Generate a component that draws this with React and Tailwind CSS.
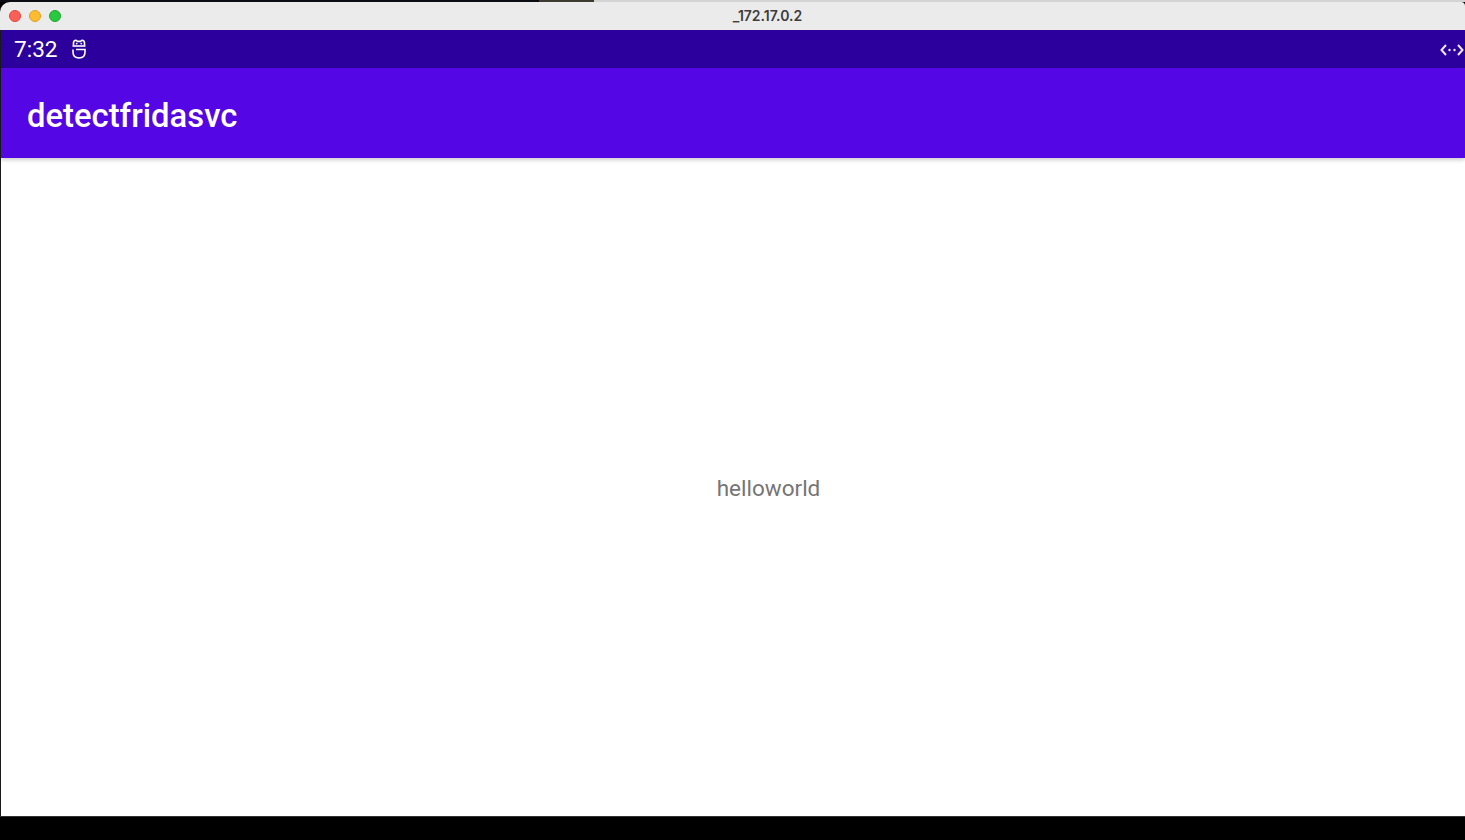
const App = () => {
  return (
    <div className="w-[1465px] h-[840px] flex flex-col overflow-hidden bg-black font-['Roboto',sans-serif]">
      {/* desktop peeking above the window */}
      <div className="h-[2px] flex shrink-0">
        <div className="w-[539px] bg-[#0b0b12]" />
        <div className="w-[55px] bg-[#3d3b30]" />
        <div className="flex-1 bg-[#d4d4d4]" />
      </div>

      <div className="h-[28px] shrink-0 relative flex items-center justify-center bg-[#ebebeb] rounded-tl-[10px] rounded-tr-[4px]">
        <div className="absolute left-[9px] top-[8px] flex gap-[8px]">
          <span className="size-[12px] rounded-full bg-[#fe5f57] border border-[#e0443e]" />
          <span className="size-[12px] rounded-full bg-[#febc2e] border border-[#dea123]" />
          <span className="size-[12px] rounded-full bg-[#28c840] border border-[#1aab29]" />
        </div>
        <span className="text-[14px] font-semibold text-[#3c3c3c] font-['Inter',sans-serif] ml-[70px] mb-[2px]">_172.17.0.2</span>
      </div>

      <div className="flex-1 flex flex-col border-l border-[#1a1a1a] min-h-0">
        <div className="h-[38px] shrink-0 flex items-center justify-between bg-[#2c009c] text-white">
          <div className="flex items-center pl-[13px]">
            <span className="text-[22.6px] leading-none mt-[2px]">7:32</span>
            <svg className="ml-[13px]" width="16" height="20" viewBox="0 0 16 20" fill="none" stroke="white" strokeWidth="1.6">
              <path d="M2.5 6.5V4Q2.5 1.2 5 1.2L6.5 2.4H9.5L11 1.2Q13.5 1.2 13.5 4V6.5" />
              <path d="M1.5 7H14.5" />
              <path d="M2 10.5V13Q2 19 8 19Q14 19 14 13V10.5H5" />
              <circle cx="5.7" cy="4.6" r="0.9" fill="white" stroke="none" />
              <circle cx="10.3" cy="4.6" r="0.9" fill="white" stroke="none" />
            </svg>
          </div>
          <svg className="mr-[1px] mt-[1px]" width="24" height="14" viewBox="0 0 24 14" fill="none" stroke="#f0e8ff" strokeWidth="2">
            <path d="M6 2L1.5 7L6 12" />
            <path d="M18 2L22.5 7L18 12" />
            <circle cx="9.5" cy="7" r="1.2" fill="#f0e8ff" stroke="none" />
            <circle cx="14.5" cy="7" r="1.2" fill="#f0e8ff" stroke="none" />
          </svg>
        </div>

        <div className="h-[90px] shrink-0 flex items-center pl-[26px] bg-[#5506e4] relative shadow-[0_2px_4px_rgba(0,0,0,0.2)]">
          <span className="text-[32.8px] font-medium text-white leading-none mt-[7px]">detectfridasvc</span>
        </div>

        <div className="flex-1 flex items-center justify-center bg-white">
          <span className="text-[22.5px] text-[#757575] leading-none ml-[71px] mt-[2px]">helloworld</span>
        </div>
      </div>

      <div className="h-[24px] shrink-0 bg-black border-t border-[#333]" />
    </div>
  );
};

export default App;
